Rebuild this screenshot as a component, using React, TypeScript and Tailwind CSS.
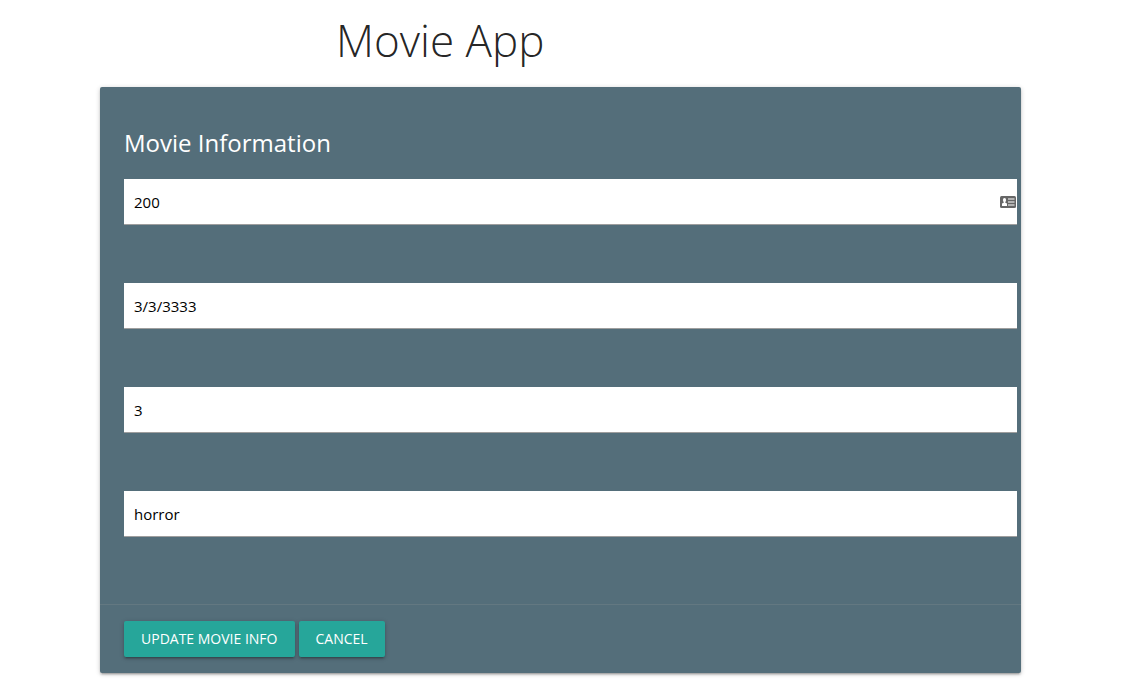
import React, { useState } from "react";

const fields = [
  { id: "name", label: "Name", value: "200" },
  { id: "release-date", label: "Release date", value: "3/3/3333" },
  { id: "duration", label: "Duration", value: "3" },
  { id: "genre", label: "Genre", value: "horror" },
];

function ContactCardIcon() {
  return (
    <svg
      viewBox="0 0 16 12"
      className="pointer-events-none absolute top-[17px] right-px h-3 w-4"
      aria-hidden="true"
    >
      <rect width="16" height="12" rx="1.5" fill="#666" />
      <ellipse cx="4.5" cy="4" rx="1.6" ry="2" fill="#fff" />
      <path d="M3.7 5H5.3V6.8L7 7.6V10H2V7.6L3.7 6.8Z" fill="#fff" />
      <path d="M8 3H14.5M8 6H14.5M8 9H14.5" stroke="#fff" strokeWidth="1.2" />
    </svg>
  );
}

function MovieField({
  id,
  label,
  value,
  hasContactCard,
}: {
  id: string;
  label: string;
  value: string;
  hasContactCard: boolean;
}) {
  const [text, setText] = useState(value);
  return (
    <div className="relative">
      <input
        id={id}
        type="text"
        aria-label={label}
        value={text}
        onChange={(e) => setText(e.target.value)}
        className="block h-[46px] w-full border-b border-[#9e9e9e] bg-white px-2.5 text-[15px] text-black outline-none"
      />
      {hasContactCard && <ContactCardIcon />}
    </div>
  );
}

function ActionButton({ type, children }: { type: "submit" | "button"; children: React.ReactNode }) {
  return (
    <button
      type={type}
      className="h-9 rounded-xs bg-[#26a69a] px-[17px] text-sm text-white uppercase shadow-[0_2px_2px_0_rgba(0,0,0,0.14),0_3px_1px_-2px_rgba(0,0,0,0.12),0_1px_5px_0_rgba(0,0,0,0.2)]"
    >
      {children}
    </button>
  );
}

export default function App() {
  return (
    <main className="pr-[110px] pb-1.5 pl-[100px] font-['Open_Sans','Noto_Sans',sans-serif] text-black/87">
      <h1 className="pt-3 pb-[18px] pl-[236px] text-[44px] leading-[57px] font-light">Movie App</h1>
      <form
        onSubmit={(e) => e.preventDefault()}
        className="rounded-xs bg-[#546e7a] shadow-[0_2px_2px_0_rgba(0,0,0,0.14),0_3px_1px_-2px_rgba(0,0,0,0.12),0_1px_5px_0_rgba(0,0,0,0.2)]"
      >
        <div className="pt-10 pr-1 pb-[67px] pl-6">
          <h2 className="pb-5 text-2xl text-white">Movie Information</h2>
          <div className="flex flex-col gap-[58px]">
            {fields.map((field, i) => (
              <MovieField key={field.id} {...field} hasContactCard={i === 0} />
            ))}
          </div>
        </div>
        <div className="flex gap-1 border-t border-[#a0a0a0]/20 px-6 py-4">
          <ActionButton type="submit">Update Movie Info</ActionButton>
          <ActionButton type="button">Cancel</ActionButton>
        </div>
      </form>
    </main>
  );
}
